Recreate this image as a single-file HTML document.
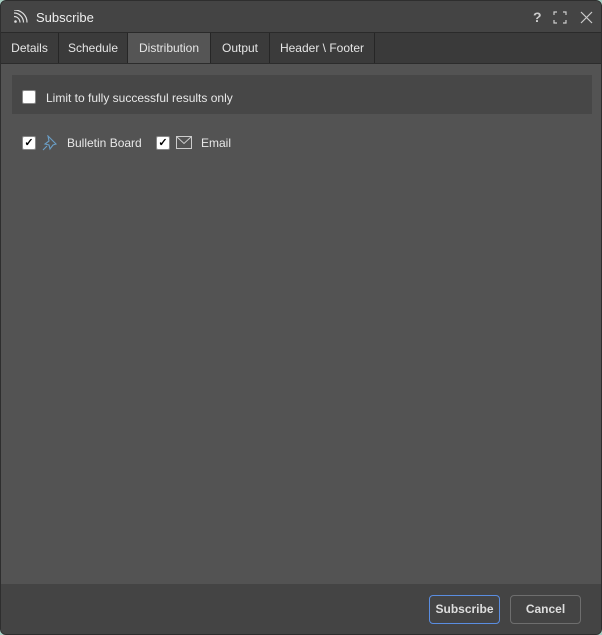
<!DOCTYPE html>
<html><head><style>
body{margin:0;width:602px;height:635px;background:#a8d0c4;font-family:"Liberation Sans",sans-serif;font-size:12px;color:#e8e8e8;overflow:hidden}
.win{position:absolute;left:0;top:0;width:600px;height:633px;border:1px solid #2e2e2e;border-radius:6px;background:#535353;overflow:hidden}
.title{position:absolute;left:0;top:0;width:600px;height:31px;background:#444;border-bottom:1px solid #2a2a2a}
.title .t{position:absolute;left:35px;top:9px;font-size:13px;color:#eee}
.tabs{position:absolute;left:0;top:32px;width:600px;height:30px;background:#3a3a3a;border-bottom:1px solid #2c2c2c}
.tab{position:absolute;top:0;height:30px;line-height:31px;text-align:center;border-right:1px solid #262626;background:#3b3b3b;color:#e6e6e6}
.tab.a{background:#555}
.opt{position:absolute;left:11px;top:74px;width:580px;height:39px;background:#474747}
.cb{position:absolute;width:12px;height:12px;background:#fff;border-radius:2px;border:1px solid #888}
.footer{position:absolute;left:0;top:583px;width:600px;height:52px;background:#444}
.btn{position:absolute;top:11px;height:27px;line-height:27px;text-align:center;border-radius:4px;color:#ddd;font-weight:bold}
.lbl{position:absolute;font-size:12px}
</style></head><body>
<div class="win">
<div class="title">
<svg style="position:absolute;left:12px;top:9px" width="16" height="14" viewBox="0 0 16 14" fill="none" stroke="#ddd" stroke-width="1.2"><circle cx="2.5" cy="11.5" r="1.3" fill="#ddd" stroke="none"/><path d="M1 6.5a6 6 0 0 1 6 6M1 3a9.5 9.5 0 0 1 9.5 9.5M1 0a12.5 12.5 0 0 1 13 12.5"/></svg>
<div class="t">Subscribe</div>
<div style="position:absolute;left:532px;top:8px;font-weight:bold;font-size:14px;color:#ccc">?</div>
<svg style="position:absolute;left:552px;top:10px" width="14" height="13" fill="none" stroke="#ccc" stroke-width="1.2"><path d="M1 4V1h3M10 1h3v3M13 9v3h-3M4 12H1V9"/></svg>
<svg style="position:absolute;left:579px;top:10px" width="13" height="13" stroke="#ccc" stroke-width="1.2"><path d="M1 1l11 11M12 1L1 12"/></svg>
</div>
<div class="tabs">
<div class="tab" style="left:0;width:57px">Details</div>
<div class="tab" style="left:58px;width:68px">Schedule</div>
<div class="tab a" style="left:127px;width:82px">Distribution</div>
<div class="tab" style="left:210px;width:58px">Output</div>
<div class="tab" style="left:269px;width:104px">Header \ Footer</div>
</div>
<div class="opt"><div class="cb" style="left:10px;top:15px"></div><div class="lbl" style="left:34px;top:16px">Limit to fully successful results only</div></div>
<div class="cb" style="left:21px;top:135px;font-size:11px;line-height:12px;color:#000;text-align:center;font-weight:bold">✓</div>
<svg style="position:absolute;left:41px;top:134px" width="16" height="16" fill="none" stroke="#6a9ec6" stroke-width="1.1"><path d="M6 1l8 8-3 1-3 4-1-4-4-1 4-3z M5 11l-4 4"/></svg>
<div class="lbl" style="left:66px;top:135px">Bulletin Board</div>
<div class="cb" style="left:155px;top:135px;font-size:11px;line-height:12px;color:#000;text-align:center;font-weight:bold">✓</div>
<svg style="position:absolute;left:175px;top:135px" width="16" height="13" fill="none" stroke="#ccc" stroke-width="1"><rect x="0.5" y="0.5" width="15" height="12"/><path d="M0.5 0.5l7.5 7 7.5-7"/></svg>
<div class="lbl" style="left:200px;top:135px">Email</div>
<div class="footer">
<div class="btn" style="left:428px;width:69px;border:1px solid #5a8de0">Subscribe</div>
<div class="btn" style="left:509px;width:69px;border:1px solid #6e6e6e">Cancel</div>
</div>
</div>
</body></html>
